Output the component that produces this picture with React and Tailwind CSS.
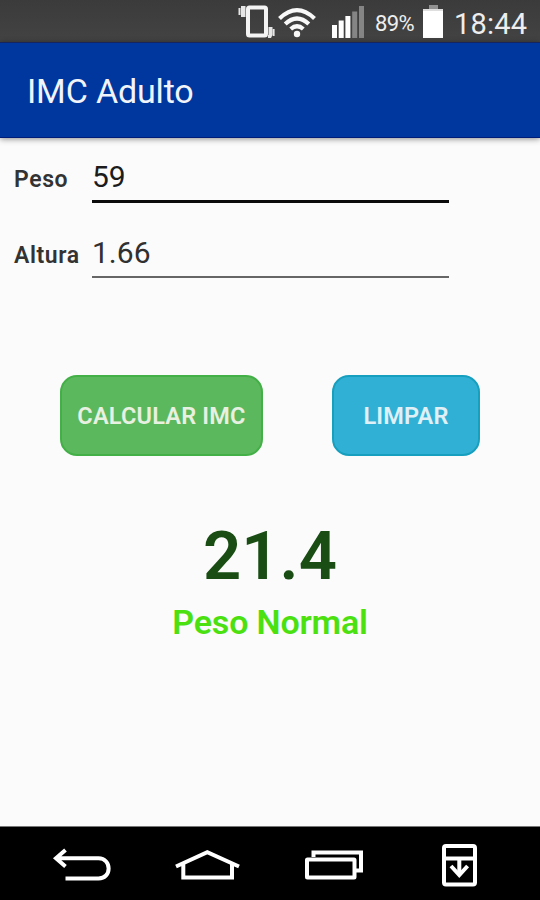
function StatusBar() {
  return (
    <header className="flex h-[42px] shrink-0 items-center bg-gradient-to-b from-[#3b3b3b] to-[#444343] pl-[236px] text-[#eeeeee]">
      <svg className="h-[42px] w-[132px] shrink-0" viewBox="236 0 132 42" fill="none">
        <rect x="248" y="7.5" width="18" height="28" rx="1.5" stroke="#f4f4f4" strokeWidth="4" />
        <g fill="#e6e6e6">
          <path d="M241 6h4.5v11H241V8zM238.5 8h2v7h-2z" />
          <path d="M268.5 27h4v8l-1.5 3h-3v-3h.5zM272.8 29h1.8v7h-1.8z" />
        </g>
        <g stroke="#f8f8f8" strokeWidth="4.2">
          <path d="M279.5 18.5Q297 1.8 314.5 18.5" />
          <path d="M285.2 24Q297 13 308.8 24" />
          <path d="M290.7 29Q297 23.4 303.3 29" />
        </g>
        <circle cx="297" cy="34" r="3.2" fill="#f8f8f8" />
        <g fill="#fff">
          <rect x="332" y="25" width="5" height="13" />
          <rect x="338.7" y="20.5" width="5" height="17.5" />
          <rect x="345.4" y="16" width="5" height="22" />
          <rect x="352.2" y="11.5" width="5" height="26.5" fill="#858585" />
          <rect x="359" y="6" width="5" height="32" fill="#858585" />
        </g>
      </svg>
      <span className="mt-[5px] w-[54px] shrink-0 pl-[7px] text-[22px] leading-[30px] tracking-[-0.6px]">89%</span>
      <svg className="h-[42px] w-[24px] shrink-0" viewBox="422 0 24 42">
        <path d="M429 5h9v4h-9z" fill="#929292" />
        <path d="M423 9h20v4h-20z" fill="#dedede" />
        <path d="M423 11h20v27h-20z" fill="#fff" />
      </svg>
      <span className="mt-[5px] pl-[8px] text-[29px] leading-[34px] tracking-[0.2px]">18:44</span>
    </header>
  );
}

function NavigationBar() {
  return (
    <nav className="h-[74px] shrink-0 border-t border-[#777777] bg-black">
      <svg className="h-[73px] w-[540px]" viewBox="0 827 540 73" fill="none" stroke="#fff" strokeWidth="4">
        <path d="M65.5 850L56 858.3L65.5 866.5M56 858.3H98.5C112 858.3 112 878.5 98.5 878.5H65.5" />
        <path d="M176 866.5L207.3 852.2L239 866.5M183.3 864V877.5H232V864" />
        <path d="M313.5 857V852.5H361V870.5H356" />
        <rect x="307" y="859.5" width="47.5" height="18" rx="0.5" />
        <rect x="444" y="846" width="31" height="38.5" rx="2" />
        <path d="M444 858.5H475M459.3 859V874" />
        <path d="M451 866L459.3 875L467.6 866" />
      </svg>
    </nav>
  );
}

function Field({ label, value, active }) {
  return (
    <div className="flex h-[76px] pl-[14px]">
      <label className="w-[78px] pt-[16px] text-[23px] leading-[28px] font-semibold tracking-[0.6px] text-[#333333]">
        {label}
      </label>
      <div
        className={
          active
            ? "h-[53px] w-[357px] border-b-[3px] border-[#0b0b0b] pt-[10px] text-[30px] leading-[34px] text-[#1c1c1c]"
            : "h-[52px] w-[357px] border-b-2 border-[#666666] pt-[10px] text-[30px] leading-[34px] text-[#303030]"
        }
      >
        {value}
      </div>
    </div>
  );
}

export default function App() {
  return (
    <div className="flex h-[900px] w-[540px] flex-col overflow-hidden bg-[#fbfbfb] font-['Roboto',sans-serif]">
      <StatusBar />
      <div className="z-10 flex h-[96px] shrink-0 items-center border-t border-b border-t-[#16255e] border-b-[#001c79] bg-[#00379e] pt-[2px] pl-[27px] shadow-[0_1px_6px_rgba(0,0,0,0.45)]">
        <h1 className="text-[34px] leading-[40px] tracking-[-0.15px] text-[#f1f4fb]">IMC Adulto</h1>
      </div>
      <main className="flex grow flex-col pt-[12px]">
        <Field label="Peso" value="59" active />
        <Field label="Altura" value="1.66" />
        <div className="mt-[73px] flex gap-[69px] pl-[60px]">
          <button className="h-[81px] w-[203px] rounded-[17px] border-2 border-[#43b047] bg-[#5cb85c] pt-[3px] text-[23.5px] font-semibold tracking-[0.2px] whitespace-nowrap text-[#e8f0e2]">
            CALCULAR IMC
          </button>
          <button className="h-[81px] w-[148px] rounded-[17px] border-2 border-[#179fbf] bg-[#31b0d5] pt-[3px] text-[23.5px] font-semibold tracking-[0.2px] text-[#e0f0f6]">
            LIMPAR
          </button>
        </div>
        <section className="mt-[60px] flex flex-col items-center">
          <strong className="text-[67px] leading-[80px] font-semibold text-[#194d14]">21.4</strong>
          <span className="mt-[6px] text-[34px] leading-[40px] font-semibold tracking-[-0.15px] text-[#4be010]">Peso Normal</span>
        </section>
      </main>
      <NavigationBar />
    </div>
  );
}
